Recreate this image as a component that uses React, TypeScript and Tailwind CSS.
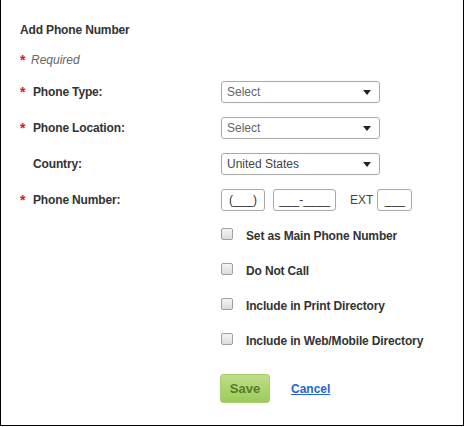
import React from 'react'

const Star = () => (
  <span className="w-[13px] shrink-0 text-[14px] font-bold leading-[16px] text-[#e0141e]">*</span>
)

function FakeSelect({ value, dark }: { value: string; dark?: boolean }) {
  return (
    <div className="flex h-[22px] w-[159px] items-center justify-between rounded-[3px] border border-[#a9a9a9] bg-white pl-[5px] pr-[8px]">
      <span className={`text-[12px] leading-none ${dark ? 'text-[#444]' : 'text-[#666]'}`}>{value}</span>
      <svg width="8" height="5" viewBox="0 0 8 5">
        <path d="M0 0h8L4 5z" fill="#222" />
      </svg>
    </div>
  )
}

function Box({ w, text }: { w: string; text: string }) {
  return (
    <div className={`flex h-[22px] ${w} items-center justify-center rounded-[3px] border border-[#a9a9a9] bg-white text-[12px] text-[#333]`}>
      {text}
    </div>
  )
}

function Check({ label }: { label: string }) {
  return (
    <div className="flex h-[16px] items-start">
      <div className="mt-[1px] h-[12px] w-[12px] rounded-[2px] border border-[#a0a0a0] bg-gradient-to-b from-[#f4f4f4] to-[#dcdcdc]" />
      <span className="ml-[13px] mt-[1px] text-[12px] font-bold leading-[16px] tracking-[-0.15px] text-[#333]">
        {label}
      </span>
    </div>
  )
}

export default function App() {
  return (
    <div className="h-[426px] w-[464px] border-x border-b border-black bg-white pl-[19px] pt-[22px] font-['Liberation_Sans',Arial,sans-serif]">
      <div className="text-[12px] font-bold leading-[16px] tracking-[-0.15px] text-[#333]">Add Phone Number</div>
      <div className="mt-[14px] flex items-start">
        <span className="w-[11px] text-[14px] font-bold leading-[16px] text-[#e0141e]">*</span>
        <span className="text-[12px] italic leading-[16px] text-[#666]">Required</span>
      </div>

      <div className="mt-[13px] grid grid-cols-[201px_auto] gap-y-[14px]">
        <div className="flex items-center">
          <Star />
          <span className="text-[12px] font-bold tracking-[-0.15px] text-[#333]">Phone Type:</span>
        </div>
        <FakeSelect value="Select" />

        <div className="flex items-center">
          <Star />
          <span className="text-[12px] font-bold tracking-[-0.15px] text-[#333]">Phone Location:</span>
        </div>
        <FakeSelect value="Select" />

        <div className="flex items-center pl-[13px]">
          <span className="text-[12px] font-bold tracking-[-0.15px] text-[#333]">Country:</span>
        </div>
        <FakeSelect value="United States" dark />

        <div className="flex items-center">
          <Star />
          <span className="text-[12px] font-bold tracking-[-0.15px] text-[#333]">Phone Number:</span>
        </div>
        <div className="flex items-center">
          <Box w="w-[44px]" text="(___)" />
          <div className="ml-[8px]">
            <Box w="w-[63px]" text="___-____" />
          </div>
          <span className="ml-[14px] text-[12px] text-[#444]">EXT</span>
          <div className="ml-[4px]">
            <Box w="w-[35px]" text="___" />
          </div>
        </div>
      </div>

      <div className="ml-[201px] mt-[16px] flex flex-col gap-[19px]">
        <Check label="Set as Main Phone Number" />
        <Check label="Do Not Call" />
        <Check label="Include in Print Directory" />
        <Check label="Include in Web/Mobile Directory" />
      </div>

      <div className="ml-[200px] mt-[26px] flex items-center">
        <button className="h-[29px] w-[50px] rounded-[3px] border border-[#a7cf6b] bg-gradient-to-b from-[#c0de88] to-[#9ccb58] text-[13px] font-bold text-[#5a7a2c]">
          Save
        </button>
        <a href="#" className="ml-[21px] text-[12px] font-bold text-[#1f63d6] underline">
          Cancel
        </a>
      </div>
    </div>
  )
}
